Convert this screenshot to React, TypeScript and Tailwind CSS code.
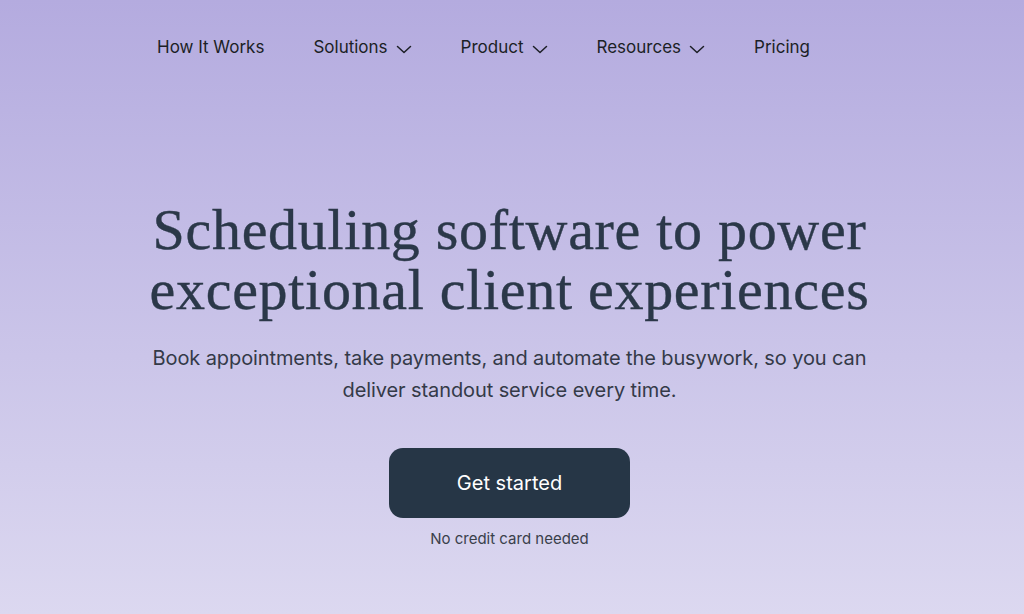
const navItems = [
  { label: "How It Works", menu: false },
  { label: "Solutions", menu: true },
  { label: "Product", menu: true },
  { label: "Resources", menu: true },
  { label: "Pricing", menu: false },
];

function Caret() {
  return (
    <svg width="16" height="9" viewBox="0 0 16 9" fill="none" className="mt-[4px]">
      <path d="M1.5 1.5l6.5 6 6.5-6" stroke="currentColor" strokeWidth="1.5" strokeLinecap="round" strokeLinejoin="round" />
    </svg>
  );
}

function NavBar() {
  return (
    <nav className="flex items-center gap-[49px] pt-[36px] pl-[157px]">
      {navItems.map((item) => (
        <a
          key={item.label}
          href="#"
          className="flex items-center gap-[8px] text-[17px] leading-[22px] text-[#1c1f26]"
        >
          {item.label}
          {item.menu && <Caret />}
        </a>
      ))}
    </nav>
  );
}

function Hero() {
  return (
    <section className="flex flex-col items-center text-center mt-[142px] pr-[5px]">
      <h1 className="font-['Liberation_Serif',serif] text-[58px] leading-[60px] text-[#2b3849] tracking-[0.7px] [-webkit-text-stroke:0.4px_#2b3849]">
        Scheduling software to power
        <br />
        exceptional client experiences
      </h1>
      <p className="mt-[22px] w-[740px] text-[20px] leading-[32px] text-[#343a48] tracking-[-0.1px]">
        Book appointments, take payments, and automate the busywork, so you can
        deliver standout service every time.
      </p>
      <button className="mt-[42px] w-[241px] h-[70px] rounded-[14px] bg-[#263646] text-white text-[20px]">
        Get started
      </button>
      <span className="mt-[10px] text-[15px] text-[#3a404b]">No credit card needed</span>
    </section>
  );
}

export default function App() {
  return (
    <div className="min-h-[614px] bg-gradient-to-b from-[#b4abdf] to-[#dcd8f0] font-['Inter',sans-serif]">
      <NavBar />
      <Hero />
    </div>
  );
}
